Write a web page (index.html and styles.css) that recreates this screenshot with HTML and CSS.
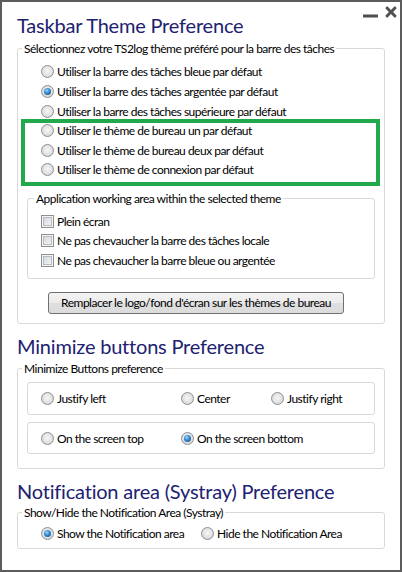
FILE: index.html
```html
<!DOCTYPE html>
<html>
<head>
<meta charset="utf-8">
<link rel="stylesheet" href="styles.css">
</head>
<body>
<div class="window">
  <div class="header">
    <h1 class="title title-first">Taskbar Theme Preference</h1>
    <svg class="controls" width="34" height="13" viewBox="0 0 34 13">
      <rect x="0" y="8.5" width="15" height="3" fill="#4f4f4f"/>
      <path d="M23 2.2 L24.2 1 L28 4.8 L31.8 1 L33 2.2 L29.2 6 L33 9.8 L31.8 11 L28 7.2 L24.2 11 L23 9.8 L26.8 6 Z" fill="#4f4f4f" stroke="#4f4f4f" stroke-width="1.2" stroke-linejoin="round"/>
    </svg>
  </div>

  <fieldset class="group group-first">
    <legend class="legend">Sélectionnez votre TS2log thème préféré pour la barre des tâches</legend>
    <div class="options">
      <div class="opt"><span class="radio"></span>Utiliser la barre des tâches bleue par défaut</div>
      <div class="opt"><span class="radio on"></span>Utiliser la barre des tâches argentée par défaut</div>
      <div class="opt"><span class="radio"></span>Utiliser la barre des tâches supérieure par défaut</div>
      <div class="highlight">
        <div class="opt"><span class="radio"></span>Utiliser le thème de bureau un par défaut</div>
        <div class="opt"><span class="radio"></span>Utiliser le thème de bureau deux par défaut</div>
        <div class="opt"><span class="radio"></span>Utiliser le thème de connexion par défaut</div>
      </div>
    </div>
    <fieldset class="group inner">
      <legend class="legend legend-inner">Application working area within the selected theme</legend>
      <div class="checks">
        <div class="chk-row"><span class="check"></span>Plein écran</div>
        <div class="chk-row"><span class="check"></span>Ne pas chevaucher la barre des tâches locale</div>
        <div class="chk-row"><span class="check"></span>Ne pas chevaucher la barre bleue ou argentée</div>
      </div>
    </fieldset>
    <button class="btn" type="button">Remplacer le logo/fond d'écran sur les thèmes de bureau</button>
  </fieldset>

  <h2 class="title title-second">Minimize buttons Preference</h2>
  <fieldset class="group group-second">
    <legend class="legend">Minimize Buttons preference</legend>
    <div class="box box-a">
      <div class="opt-inline"><span class="radio"></span>Justify left</div>
      <div class="opt-inline"><span class="radio"></span>Center</div>
      <div class="opt-inline"><span class="radio"></span>Justify right</div>
    </div>
    <div class="box box-b">
      <div class="opt-inline"><span class="radio"></span>On the screen top</div>
      <div class="opt-inline"><span class="radio on"></span>On the screen bottom</div>
    </div>
  </fieldset>

  <h2 class="title title-third">Notification area (Systray) Preference</h2>
  <fieldset class="group group-third">
    <legend class="legend">Show/Hide the Notification Area (Systray)</legend>
    <div class="sys-row">
      <div class="opt-inline"><span class="radio on"></span>Show the Notification area</div>
      <div class="opt-inline"><span class="radio"></span>Hide the Notification Area</div>
    </div>
  </fieldset>
</div>
</body>
</html>
```
FILE: styles.css
```css
* { box-sizing: border-box; }
html, body { margin: 0; padding: 0; background: #fff; }
body {
  font-family: Lato, "Liberation Sans", sans-serif;
  font-size: 12px;
  letter-spacing: -0.5px;
  color: #000;
}
.window {
  width: 402px;
  height: 572px;
  border: 2px solid #5c5c5c;
  padding: 0 15px;
  overflow: hidden;
  background: #fff;
}
.header {
  display: flex;
  justify-content: space-between;
  align-items: flex-start;
}
.controls {
  display: block;
  margin: 4px -12px 0 0;
  flex: none;
}
.title {
  margin: 0;
  font-size: 20px;
  line-height: 26px;
  letter-spacing: -0.2px;
  font-weight: normal;
  color: #21216f;
}
.title-first { margin-top: 10px; }
.title-second { margin-top: 9.5px; }
.title-third { margin-top: 9px; }

.group {
  margin: 0;
  padding: 0;
  border: 1px solid #d9d9d9;
  border-radius: 3px;
  min-width: 0;
}
.group-first { margin-top: 2.5px; }
.group-second { margin-top: 1.3px; padding-bottom: 14px; }
.group-third { margin-top: 0.5px; padding-bottom: 5px; }

.legend {
  padding: 0 2px;
  margin-left: 4px;
  line-height: 15px;
}
.legend-inner { margin-left: 6px; }

.options { padding-top: 6.7px; }
.opt {
  display: flex;
  align-items: center;
  height: 19.6px;
  padding-left: 23px;
  white-space: nowrap;
}
.highlight { position: relative; }
.highlight::after {
  content: "";
  position: absolute;
  left: 3px;
  right: 4px;
  top: -2px;
  bottom: -6px;
  border: 4px solid #22a94b;
  pointer-events: none;
}

.radio {
  position: relative;
  flex: none;
  width: 13px;
  height: 13px;
  margin-right: 3px;
  border-radius: 50%;
  border: 1px solid #8d9096;
  background: radial-gradient(circle at 50% 45%, #f6f6f6 0%, #e6e6e6 45%, #c9cbcd 100%);
}
.radio.on::after {
  content: "";
  position: absolute;
  left: 2px;
  top: 2px;
  width: 7px;
  height: 7px;
  border-radius: 50%;
  background: radial-gradient(circle at 40% 35%, #a6dbff 0%, #3a8fd6 40%, #0d3f73 100%);
}

.inner {
  margin: 11.2px 9px 0;
}
.checks { padding: 6px 0 8px 13px; }
.chk-row {
  display: flex;
  align-items: center;
  height: 19.3px;
  white-space: nowrap;
}
.check {
  flex: none;
  width: 13px;
  height: 13px;
  margin-right: 3px;
  border: 1px solid #8e8f8f;
  background: #f4f4f4;
  box-shadow: inset 0 0 0 1px #f4f4f4, inset 0 0 0 2px #b8bcc2;
  background-image: linear-gradient(135deg, #cfd2d6 0%, #eceef0 70%, #f8f8f8 100%);
}

.btn {
  display: block;
  width: 296px;
  height: 22px;
  margin: 13px 0 9px 30px;
  padding: 0;
  border: 1px solid #707070;
  border-radius: 3px;
  background: linear-gradient(#f3f3f3 0%, #ebebeb 50%, #dfdfdf 51%, #dcdcdc 100%);
  font: inherit;
  letter-spacing: inherit;
  color: #000;
  white-space: nowrap;
}

.box {
  display: grid;
  grid-template-columns: 140px 90px auto;
  align-items: center;
  margin: 0 9px;
  padding-left: 13px;
  border: 1px solid #d9d9d9;
  border-radius: 3px;
}
.box-a { margin-top: 6.5px; height: 33px; }
.box-b { margin-top: 7px; height: 32px; }
.opt-inline {
  display: flex;
  align-items: center;
  white-space: nowrap;
}
.sys-row {
  display: grid;
  grid-template-columns: 160px auto;
  align-items: center;
  height: 20px;
  margin-top: 3.5px;
  padding-left: 23px;
}
```
